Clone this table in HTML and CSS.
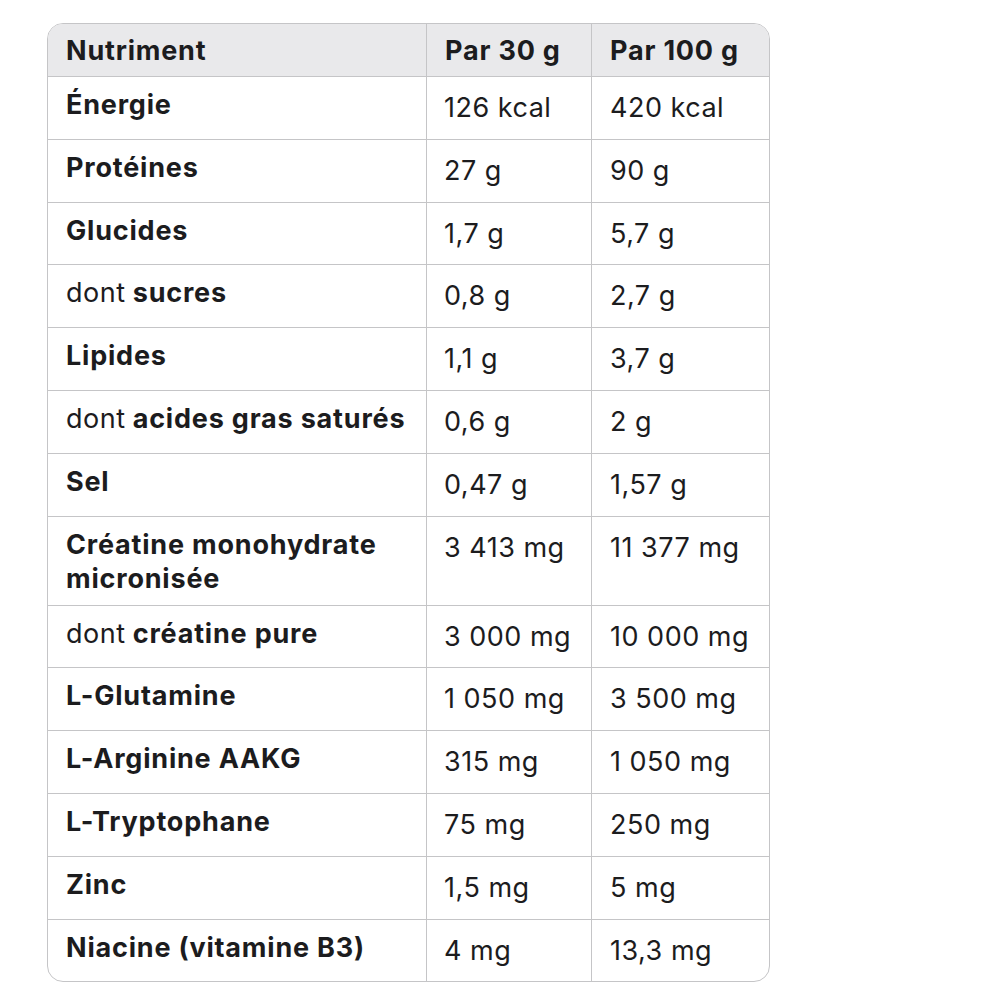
FILE: index.html
```html
<!DOCTYPE html>
<html lang="fr">
<head>
<meta charset="utf-8">
<link rel="stylesheet" href="styles.css">
</head>
<body>
<div class="card">
<table class="nutri">
<colgroup><col class="c1"><col class="c2"><col class="c3"></colgroup>
<thead>
<tr><th>Nutriment</th><th>Par 30 g</th><th>Par 100 g</th></tr>
</thead>
<tbody>
<tr><th>Énergie</th><td>126 kcal</td><td>420 kcal</td></tr>
<tr><th>Protéines</th><td>27 g</td><td>90 g</td></tr>
<tr><th>Glucides</th><td>1,7 g</td><td>5,7 g</td></tr>
<tr><th><span class="reg">dont</span> sucres</th><td>0,8 g</td><td>2,7 g</td></tr>
<tr><th>Lipides</th><td>1,1 g</td><td>3,7 g</td></tr>
<tr><th><span class="reg">dont</span> acides gras saturés</th><td>0,6 g</td><td>2 g</td></tr>
<tr><th>Sel</th><td>0,47 g</td><td>1,57 g</td></tr>
<tr><th>Créatine monohydrate micronisée</th><td>3 413 mg</td><td>11 377 mg</td></tr>
<tr><th><span class="reg">dont</span> créatine pure</th><td>3 000 mg</td><td>10 000 mg</td></tr>
<tr><th>L-Glutamine</th><td>1 050 mg</td><td>3 500 mg</td></tr>
<tr><th>L-Arginine AAKG</th><td>315 mg</td><td>1 050 mg</td></tr>
<tr><th>L-Tryptophane</th><td>75 mg</td><td>250 mg</td></tr>
<tr><th>Zinc</th><td>1,5 mg</td><td>5 mg</td></tr>
<tr class="last"><th>Niacine (vitamine B3)</th><td>4 mg</td><td>13,3 mg</td></tr>
</tbody>
</table>
</div>
</body>
</html>
```
FILE: styles.css
```css
html, body {
  margin: 0;
  background: #ffffff;
}
body {
  padding: 23px 0 0 47px;
  font-family: Inter, "Noto Sans", "Liberation Sans", sans-serif;
  color: #1c1c1e;
}
.card {
  width: 721px;
  border: 1px solid #c5c5c7;
  border-radius: 16px;
  overflow: hidden;
}
.nutri {
  width: 721px;
  table-layout: fixed;
  border-collapse: separate;
  border-spacing: 0;
  font-size: 27px;
  line-height: 34px;
  letter-spacing: 0.5px;
}
.c1 { width: 379px; }
.c2 { width: 165px; }
.c3 { width: 177px; }
.nutri th, .nutri td {
  text-align: left;
  vertical-align: top;
  border-right: 1px solid #c5c5c7;
  border-bottom: 1px solid #c5c5c7;
  padding: 0 0 0 18px;
}
.nutri th:last-child, .nutri td:last-child {
  border-right: none;
}
.nutri tr.last th, .nutri tr.last td {
  border-bottom: none;
}
.nutri thead th {
  background: #e9e9eb;
  font-weight: 700;
  letter-spacing: 0.8px;
  padding-top: 10px;
  padding-bottom: 8px;
}
.nutri tbody th {
  font-weight: 700;
  letter-spacing: 0.8px;
  padding-top: 11px;
  padding-bottom: 9px;
}
.nutri tbody td {
  font-weight: 400;
  padding-top: 14px;
  padding-bottom: 13.8px;
}
.nutri td:nth-child(2) { padding-left: 17px; }
.reg { font-weight: 400; letter-spacing: 0.5px; }
```
